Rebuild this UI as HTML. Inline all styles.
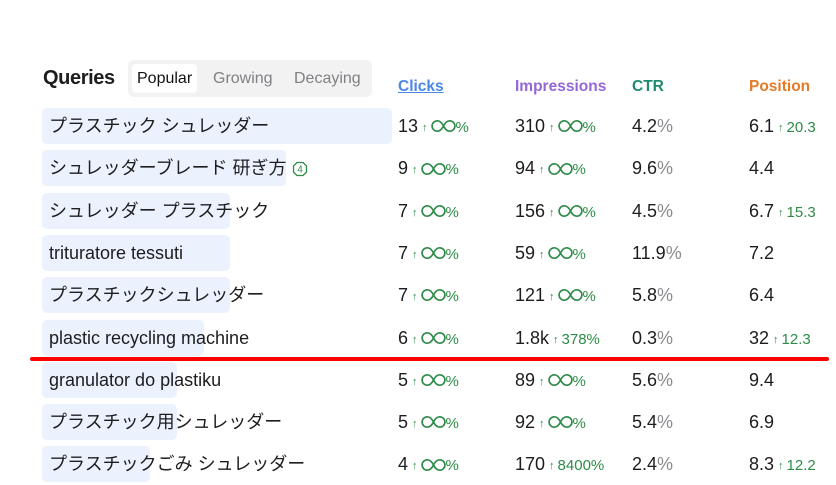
<!DOCTYPE html>
<html><head><meta charset="utf-8"><style>
*{margin:0;padding:0;box-sizing:border-box}
body{width:836px;height:484px;background:#fff;font-family:"Liberation Sans","Noto Sans CJK JP",sans-serif;color:#1d1d1f;position:relative;overflow:hidden}
.abs{position:absolute}
.title{left:43px;top:67px;font-size:20px;font-weight:bold;letter-spacing:-0.4px}
.tabs{left:128px;top:60px;width:244px;height:37px;background:#f2f2f3;border-radius:6px}
.tab{position:absolute;top:4px;height:29px;line-height:29px;font-size:16px;color:#808085}
.tab.on{background:#fff;color:#111;border-radius:4px;padding:0 5px}
.hd{top:78px;font-size:15.5px;font-weight:bold}
.bar{left:42px;height:36px;background:#ebf1fd;border-radius:5px}
.q{left:49px;font-size:18px;line-height:36px;white-space:nowrap}
.n{font-size:18px;line-height:36px;white-space:nowrap}
.g{color:#2e8b48;font-size:15px}
.ar{font-size:11px;color:#2e8b48;margin:0 3px 0 4px;position:relative;top:-1px}
.p{color:#8a8a8e}
svg.inf{vertical-align:middle;position:relative;top:-1px}
</style></head><body>
<div class="abs title">Queries</div>
<div class="abs tabs">
<div class="tab on" style="left:4px">Popular</div>
<div class="tab" style="left:85px">Growing</div>
<div class="tab" style="left:166px">Decaying</div>
</div>
<div class="abs hd" style="left:398px;color:#4a88e8;text-decoration:underline">Clicks</div>
<div class="abs hd" style="left:515px;color:#9466d8">Impressions</div>
<div class="abs hd" style="left:632px;color:#1f8a72">CTR</div>
<div class="abs hd" style="left:749px;color:#e57a27">Position</div>

<div id="rows"></div>
<div class="abs" style="left:30px;top:357px;width:799px;height:4px;background:#f00;border-radius:2px"></div>
<script>
var inf='<svg class="inf" width="25" height="14" viewBox="0 0 25 14"><path d="M12.5 7C10.5 3 8.5 1.8 6.3 1.8A5.2 5.2 0 0 0 6.3 12.2C8.5 12.2 10.5 11 12.5 7C14.5 3 16.5 1.8 18.7 1.8A5.2 5.2 0 0 1 18.7 12.2C16.5 12.2 14.5 11 12.5 7Z" fill="none" stroke="#2e8b48" stroke-width="1.7"/></svg>';
function up(v){return '<span class="ar">↑</span><span class="g">'+v+'</span>';}
function ui(){return '<span class="ar">↑</span>'+inf+'<span class="g">%</span>';}
var R=[
["プラスチック シュレッダー",392,"13",ui(),"310",ui(),"4.2","6.1",up("20.3")],
["シュレッダーブレード 研ぎ方",286,"9",ui(),"94",ui(),"9.6","4.4",""],
["シュレッダー プラスチック",230,"7",ui(),"156",ui(),"4.5","6.7",up("15.3")],
["trituratore tessuti",230,"7",ui(),"59",ui(),"11.9","7.2",""],
["プラスチックシュレッダー",230,"7",ui(),"121",ui(),"5.8","6.4",""],
["plastic recycling machine",204,"6",ui(),"1.8k",up("378%"),"0.3","32",up("12.3")],
["granulator do plastiku",177,"5",ui(),"89",ui(),"5.6","9.4",""],
["プラスチック用シュレッダー",177,"5",ui(),"92",ui(),"5.4","6.9",""],
["プラスチックごみ シュレッダー",150,"4",ui(),"170",up("8400%"),"2.4","8.3",up("12.2")]
];
var h='';
R.forEach(function(r,i){
var t=108+i*42.3;
h+='<div class="abs bar" style="top:'+t+'px;width:'+(r[1]-42)+'px"></div>';
var q=r[0];
if(i==1)q+=' <svg width="16" height="16" viewBox="0 0 16 16" style="vertical-align:middle;position:relative;top:-1px"><polygon points="5,1.5 11,1.5 14.5,5 14.5,11 11,14.5 5,14.5 1.5,11 1.5,5" fill="none" stroke="#2e8b48" stroke-width="1.3" stroke-linejoin="round"/><text x="8" y="11.5" font-size="10" text-anchor="middle" fill="#2e8b48" font-family="Liberation Sans">4</text></svg>';
h+='<div class="abs q" style="top:'+t+'px">'+q+'</div>';
h+='<div class="abs n" style="left:398px;top:'+t+'px">'+r[2]+r[3]+'</div>';
h+='<div class="abs n" style="left:515px;top:'+t+'px">'+r[4]+r[5]+'</div>';
h+='<div class="abs n" style="left:632px;top:'+t+'px">'+r[6]+'<span class="p">%</span></div>';
h+='<div class="abs n" style="left:749px;top:'+t+'px">'+r[7]+r[8]+'</div>';
});
document.getElementById('rows').innerHTML=h;
</script>
</body></html>
